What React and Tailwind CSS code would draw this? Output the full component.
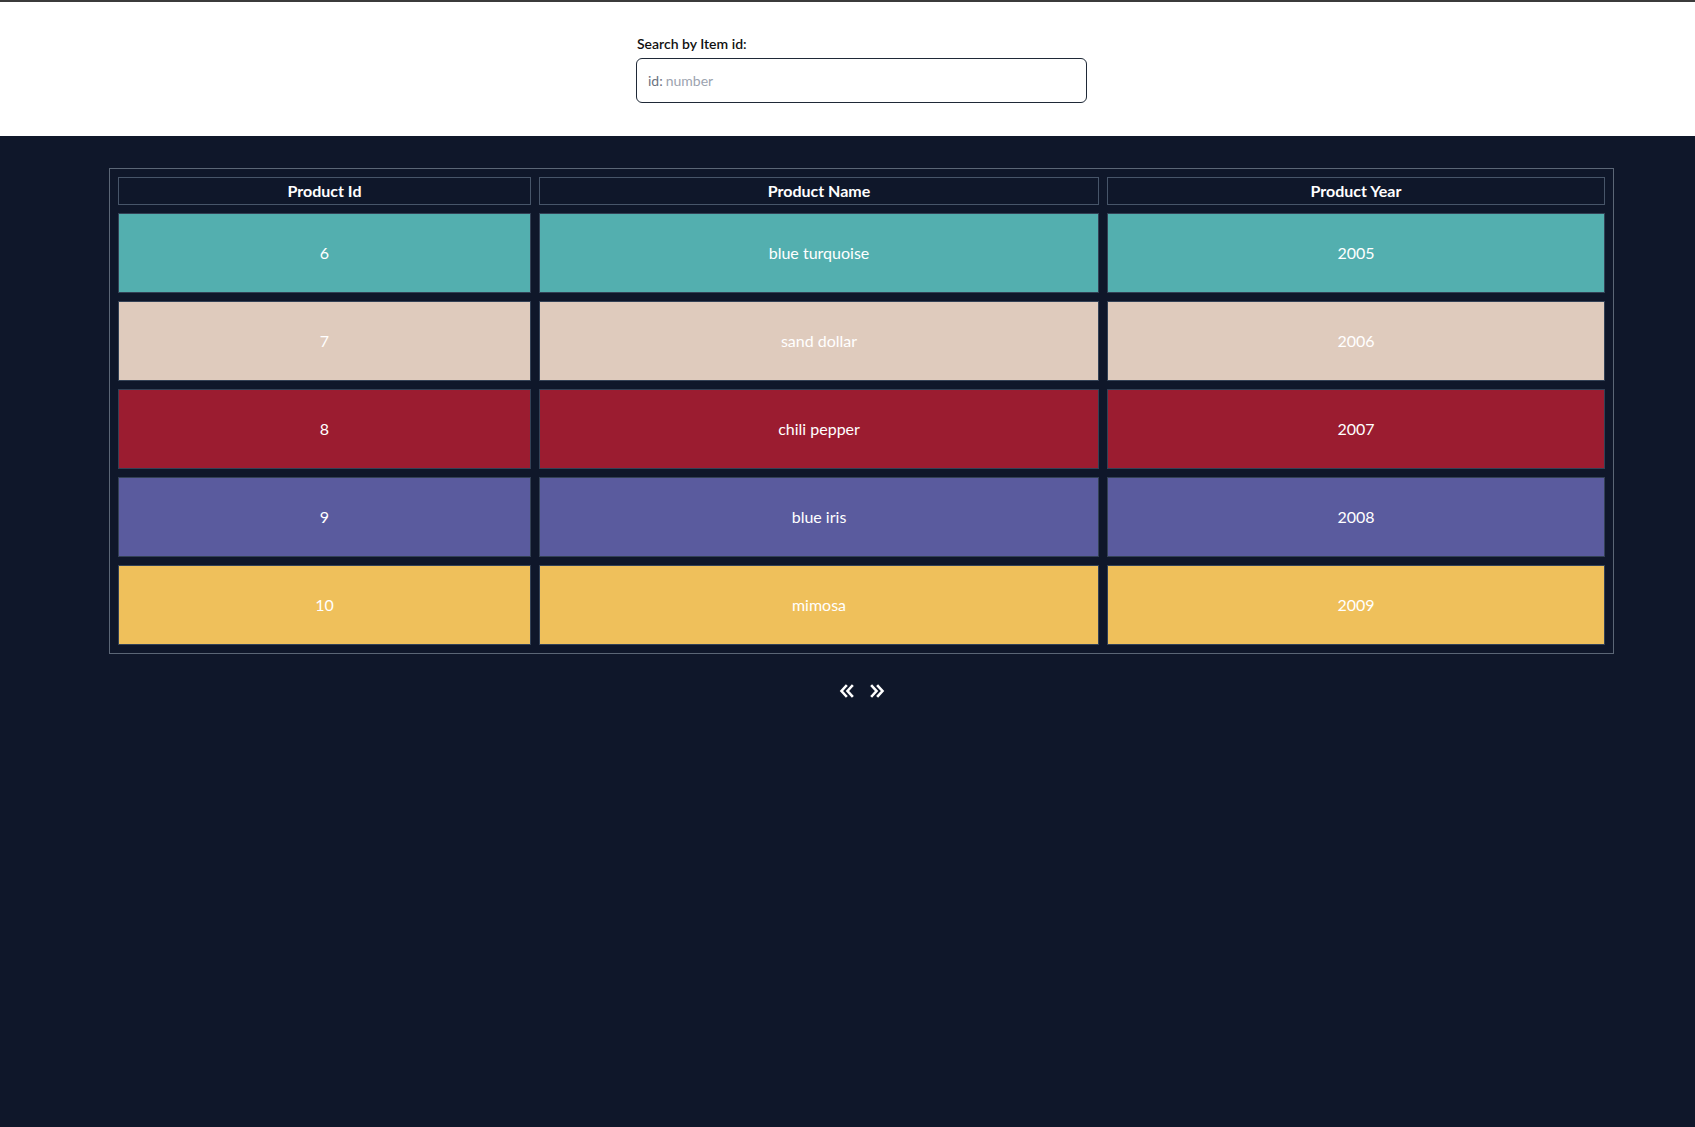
import { useState } from "react";

const products = [
  { id: 6, name: "blue turquoise", year: 2005, color: "bg-[#53afaf]" },
  { id: 7, name: "sand dollar", year: 2006, color: "bg-[#dfcbbd]" },
  { id: 8, name: "chili pepper", year: 2007, color: "bg-[#9b1c30]" },
  { id: 9, name: "blue iris", year: 2008, color: "bg-[#5a5b9e]" },
  { id: 10, name: "mimosa", year: 2009, color: "bg-[#efc05b]" },
];

function Chevrons({ dir }) {
  const d = dir === "left"
    ? "M7 2 L2.5 7 L7 12 M13 2 L8.5 7 L13 12"
    : "M2 2 L6.5 7 L2 12 M8 2 L12.5 7 L8 12";
  return (
    <svg width="15" height="14" viewBox="0 0 15 14" fill="none">
      <path d={d} stroke="white" strokeWidth="2.6" strokeLinecap="square" strokeLinejoin="miter" />
    </svg>
  );
}

export default function App() {
  const [query, setQuery] = useState("");

  return (
    <div className="min-h-[1127px] flex flex-col font-['Lato',sans-serif] bg-[#0f172a]">
      <header className="h-[136px] bg-white border-t-2 border-[#3b3b3b] pt-[32px]">
        <div className="ml-[636px] w-[451px]">
          <label className="block text-[14px] leading-5 font-semibold text-[#111] mb-[4px] pl-[1px]">
            Search by Item id:
          </label>
          <div className="h-[45px] flex items-center border border-[#1f2937] rounded-md px-[11px] text-[14px]">
            <span className="text-[#6b7280] mr-[3px]">id:</span>
            <input
              value={query}
              onChange={(e) => setQuery(e.target.value)}
              placeholder="number"
              className="flex-1 outline-none bg-transparent placeholder:text-[#9ca3af] text-[#111]"
            />
          </div>
        </div>
      </header>

      <main className="flex-1 pt-[32px]">
        <table className="ml-[109px] w-[1505px] table-fixed border-separate border-spacing-2 border border-[#5b6676] text-white text-[16px]">
          <thead>
            <tr>
              <th className="w-[413px] h-[28px] border border-[#475569] font-bold">Product Id</th>
              <th className="w-[560px] h-[28px] border border-[#475569] font-bold">Product Name</th>
              <th className="w-[498px] h-[28px] border border-[#475569] font-bold">Product Year</th>
            </tr>
          </thead>
          <tbody>
            {products.map((p) => (
              <tr key={p.id}>
                <td className={`h-[80px] text-center border border-[#334155] ${p.color}`}>{p.id}</td>
                <td className={`h-[80px] text-center border border-[#334155] ${p.color}`}>{p.name}</td>
                <td className={`h-[80px] text-center border border-[#334155] ${p.color}`}>{p.year}</td>
              </tr>
            ))}
          </tbody>
        </table>

        <div className="flex justify-center gap-[16px] mt-[30px] pl-[28px]">
          <button className="p-0"><Chevrons dir="left" /></button>
          <button className="p-0"><Chevrons dir="right" /></button>
        </div>
      </main>
    </div>
  );
}
